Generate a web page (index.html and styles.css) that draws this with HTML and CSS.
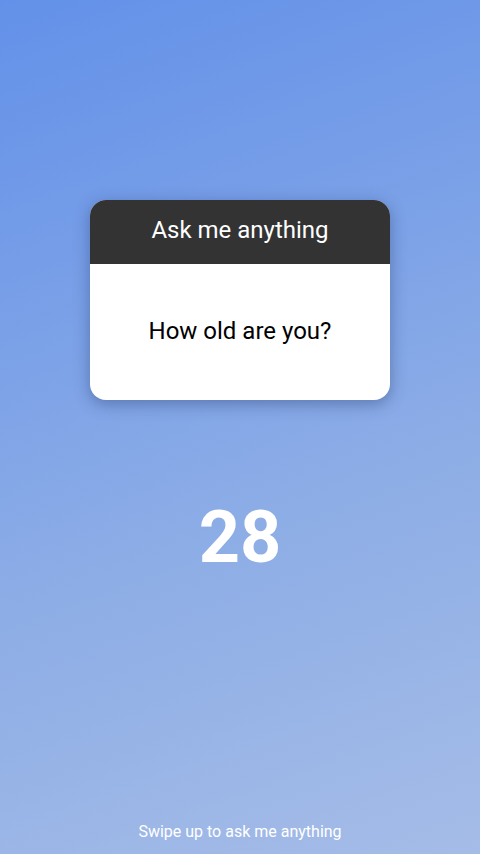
FILE: index.html
```html
<!DOCTYPE html>
<html>
<head>
<meta charset="utf-8">
<link rel="stylesheet" href="styles.css">
</head>
<body>
<main class="screen">
  <section class="card">
    <header class="card-head">Ask me anything</header>
    <div class="card-body">How old are you?</div>
  </section>
  <div class="answer">28</div>
  <footer class="hint">Swipe up to ask me anything</footer>
</main>
</body>
</html>
```
FILE: styles.css
```css
html, body {
  margin: 0;
  padding: 0;
}
body {
  font-family: Roboto, "Liberation Sans", sans-serif;
}
.screen {
  width: 480px;
  height: 854px;
  box-sizing: border-box;
  background: linear-gradient(160deg, #6391e9 0%, #8dade6 60%, #a5bce7 100%);
  display: flex;
  flex-direction: column;
  align-items: center;
  padding-top: 200px;
}
.card {
  width: 300px;
  border-radius: 16px;
  overflow: hidden;
  background: #fff;
  box-shadow: 0 4px 16px rgba(40, 60, 110, 0.45);
}
.card-head {
  height: 64px;
  padding-bottom: 4px;
  box-sizing: border-box;
  background: #333333;
  color: #fff;
  font-size: 24px;
  display: flex;
  align-items: center;
  justify-content: center;
}
.card-body {
  height: 136px;
  padding-bottom: 2px;
  box-sizing: border-box;
  display: flex;
  align-items: center;
  justify-content: center;
  font-size: 24px;
  color: #000;
}
.answer {
  margin-top: 96px;
  color: #fff;
  font-size: 72px;
  font-weight: 700;
  line-height: 84px;
}
.hint {
  margin-top: auto;
  margin-bottom: 12px;
  color: #fff;
  font-size: 16px;
  line-height: 20px;
}
```
